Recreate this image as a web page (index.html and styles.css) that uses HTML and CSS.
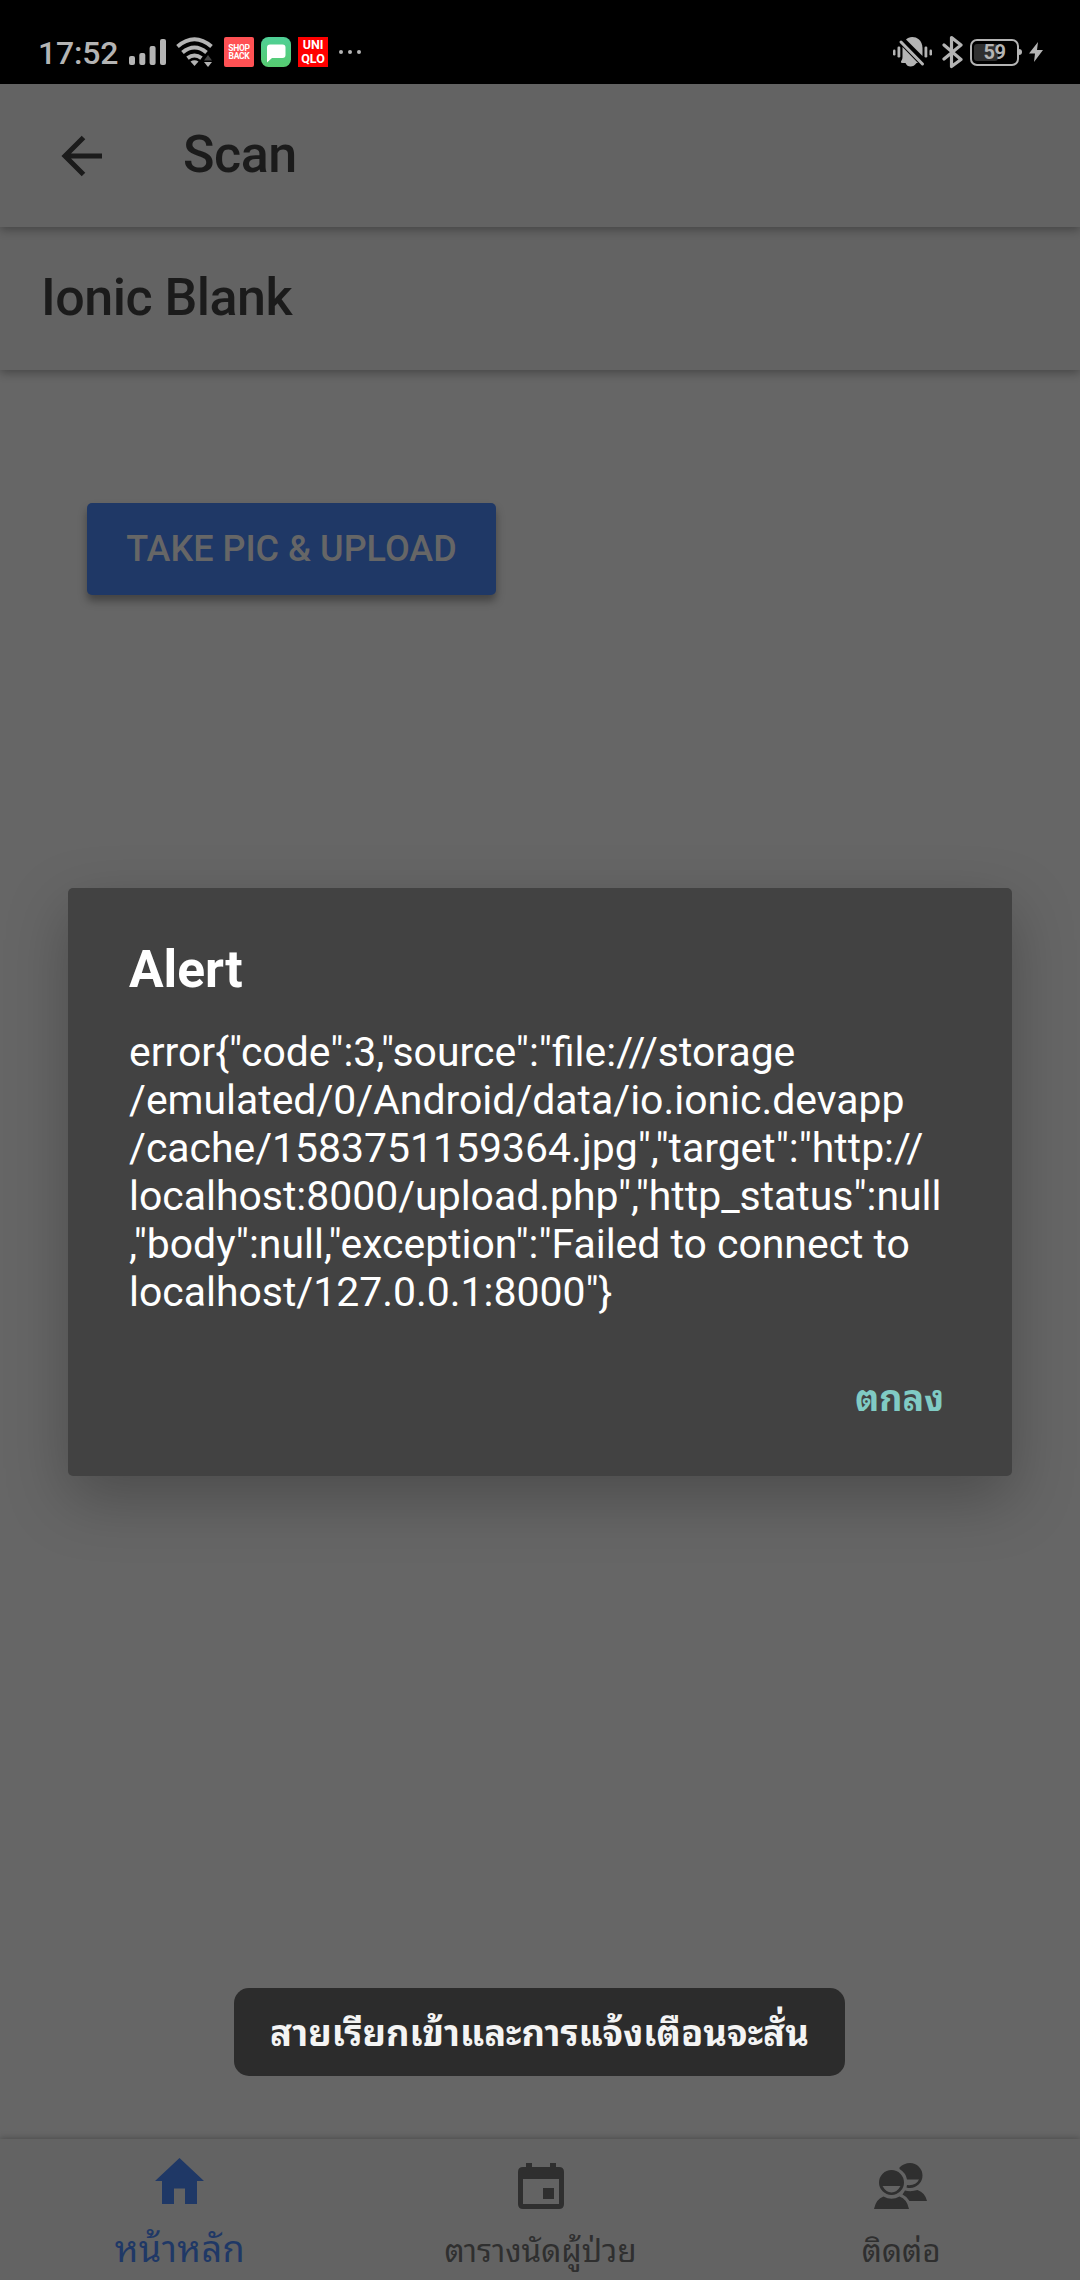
FILE: index.html
```html
<!DOCTYPE html>
<html lang="th">
<head>
<meta charset="utf-8">
<title>Scan</title>
<link rel="stylesheet" href="styles.css">
</head>
<body>
<div class="screen">
  <div class="statusbar">
    <div class="status-left">
      <span class="clock">17:52</span>
      <svg class="signal" width="38" height="27" viewBox="0 0 38 27" fill="#b4b4b4"><rect x="0" y="17" width="6" height="9" rx="2"/><rect x="10.300" y="14" width="6" height="12" rx="2"/><rect x="20.600" y="7" width="6" height="19" rx="2"/><rect x="31" y="0" width="6" height="26" rx="2"/></svg>
      <svg class="wifi" width="38" height="30" viewBox="0 0 38 30" fill="none" stroke="#b4b4b4" stroke-width="4"><path d="M1.500 9.500Q18.500-5 35.500 9.500"/><path d="M6.500 15.500Q18.500 5.500 30.500 15.500"/><path d="M11.500 21.200Q18.500 15.800 25.500 21.200"/><path d="M14.500 24.500Q18.500 22 22.500 24.500L18.500 29z" fill="#b4b4b4" stroke="none"/><path d="M28 23.500L32 18l4 5.500z" fill="#444" stroke="none"/><path d="M28 25h8l-4 5z" fill="#b4b4b4" stroke="none"/></svg>
      <span class="app shop"><b>SHOP</b><b>BACK</b></span>
      <svg class="msg" width="30" height="30" viewBox="0 0 30 30"><defs><linearGradient id="g" x2="0" y2="1"><stop stop-color="#4fd097"/><stop offset="1" stop-color="#57cb70"/></linearGradient></defs><rect width="30" height="30" rx="7.500" fill="url(#g)"/><path d="M9 7.500H21.500Q24.500 7.500 24.500 10.500V18Q24.500 21 21.500 21H11L6 25.500V10.500Q6 7.500 9 7.500z" fill="#fff"/></svg>
      <span class="app uniqlo"><b>UNI</b><b>QLO</b></span>
      <svg class="more" width="24" height="6" viewBox="0 0 24 6" fill="#b4b4b4"><circle cx="3" cy="3" r="2"/><circle cx="12" cy="3" r="2"/><circle cx="21" cy="3" r="2"/></svg>
    </div>
    <div class="status-right">
      <svg width="40" height="32" viewBox="0 0 40 32" fill="#b4b4b4"><rect x="0" y="13.500" width="2.500" height="6" rx="1.200"/><rect x="4.500" y="10.500" width="2.800" height="11" rx="1.200"/><rect x="31.500" y="10.500" width="2.800" height="11" rx="1.200"/><rect x="36.500" y="13.500" width="2.500" height="6" rx="1.200"/><path d="M13 3.500C17-1 29 0 29.500 12V20z"/><path d="M9.500 11L25 27H23.500Q21 30.500 17.500 30.500T12.500 27H9.500Q7 27 8.500 24.500 9.500 23.500 9.500 21z"/><path d="M8 6L29.500 28" fill="none" stroke="#b4b4b4" stroke-width="3" stroke-linecap="round"/></svg>
      <svg class="bt" width="22" height="34" viewBox="0 0 22 34" fill="none" stroke="#b4b4b4" stroke-width="3.200" stroke-linejoin="round" stroke-linecap="round"><path d="M2 10L19 24.500 9.500 31.500V2.500L19 10 2 24"/></svg>
      <div class="battery"><span class="level"></span><span class="pct">59</span></div>
      <svg class="bolt" width="14" height="20" viewBox="0 0 14 20" fill="#b4b4b4"><path d="M9 0L0 11.500H6L5 20 14 8H8z"/></svg>
    </div>
  </div>

  <header class="toolbar toolbar-back">
    <svg width="42" height="42" viewBox="0 0 42 42" fill="none" stroke="#1b1b1b" stroke-width="5"><path d="M41 21H4M22.500 2.500L4 21 22.500 39.500"/></svg>
    <h1>Scan</h1>
  </header>
  <header class="toolbar"><h1>Ionic Blank</h1></header>

  <main class="content">
    <button class="upload">TAKE PIC &amp; UPLOAD</button>
  </main>

  <nav class="tabs">
    <a class="tab active">
      <svg width="50" height="46" viewBox="0 0 50 46" fill="#1f3866"><path d="M24.500 0L49 23H42V46H30V30.500H19V46H7V23H0z"/></svg>
      <span>หน้าหลัก</span>
    </a>
    <a class="tab">
      <svg width="46" height="46" viewBox="0 0 46 46" fill="#2f2f2f"><path fill-rule="evenodd" d="M8 0H14V4H32V0H38V4H41Q46 4 46 9V41Q46 46 41 46H5Q0 46 0 41V9Q0 4 5 4H8zM5 16V41H41V16zM25 25H36V36H25z"/></svg>
      <span>ตารางนัดผู้ป่วย</span>
    </a>
    <a class="tab">
      <svg width="54" height="46" viewBox="0 0 54 46" fill="#2f2f2f"><path fill-rule="evenodd" d="M17.500 7a12.500 12.500 0 1 1 0 25 12.500 12.500 0 1 1 0-25zM8.500 23Q12 29.500 17.500 29.500T26.500 23z"/><path d="M0 46Q2 36 9.500 33.500 17.500 38 25.500 33.500 33 36 35 46z"/><path fill-rule="evenodd" d="M25.500 4.500Q30 0 36 0A12.500 12.500 0 0 1 36 25Q34 25 32.500 24.500L33 22Q42 23 45 16.500H33Q32 10 25.500 6z"/><path d="M31 27.500Q37 29 43.500 27 51 29.500 53 38H35.500Q33 33.500 28.500 31.500z"/></svg>
      <span>ติดต่อ</span>
    </a>
  </nav>

  <section class="alert">
    <h2>Alert</h2>
    <p>error{"code":3,"source":"file:///storage<br>/emulated/0/Android/data/io.ionic.devapp<br>/cache/1583751159364.jpg","target":"http://<br>localhost:8000/upload.php","http_status":null<br>,"body":null,"exception":"Failed to connect to<br>localhost/127.0.0.1:8000"}</p>
    <button class="ok">ตกลง</button>
  </section>
  <div class="toast">สายเรียกเข้าและการแจ้งเตือนจะสั่น</div>
</div>
</body>
</html>
```
FILE: styles.css
```css
* { box-sizing: border-box; }
body { margin: 0; font-family: Roboto, "Noto Sans Thai Looped", "Noto Looped Thai", Waree, Loma, Garuda, "Noto Sans Thai", sans-serif; }
svg { display: block; flex: none; }
button { border: 0; padding: 0; font-family: inherit; }
.screen { position: relative; display: flex; flex-direction: column; width: 1080px; height: 2280px; overflow: hidden; background: #666; }

.statusbar { flex: none; display: flex; justify-content: space-between; height: 84px; padding: 20px 37px 0 38px; background: #000; color: #b4b4b4; }
.status-left, .status-right { display: flex; align-items: center; height: 64px; }
.clock { width: 91px; padding-top: 2px; font-size: 32px; font-weight: 500; letter-spacing: -.2px; line-height: 64px; }
.wifi { margin-left: 9px; }
.app { display: flex; flex-direction: column; justify-content: center; width: 30px; height: 30px; color: #fff; text-align: center; }
.shop { margin-left: 10px; border-radius: 2px; background: #ff5154; font-family: "Liberation Sans Narrow", Roboto, sans-serif; font-size: 8.500px; line-height: 8.500px; letter-spacing: -.3px; }
.msg { margin-left: 7px; }
.uniqlo { margin-left: 7px; background: #f00; font-family: "Liberation Sans Narrow", Roboto, sans-serif; font-size: 12.500px; line-height: 14px; }
.more { margin-left: 10px; }
.bt { margin-left: 9px; }
.battery { position: relative; width: 49px; height: 27px; margin-left: 6px; border: 2px solid #b4b4b4; border-radius: 7px; text-align: center; }
.battery::after { content: ""; position: absolute; right: -5px; top: 8px; width: 3px; height: 6px; border-radius: 0 3px 3px 0; background: #b4b4b4; }
.level { position: absolute; left: 2px; top: 3px; width: 24px; height: 17px; border-radius: 3px; background: #303030; }
.pct { display: block; position: relative; font-size: 20px; font-weight: 700; letter-spacing: -.5px; line-height: 23px; }
.bolt { margin-left: 10px; }

.toolbar { flex: none; position: relative; z-index: 1; display: flex; align-items: center; height: 143px; padding-left: 41px; background: #636363; box-shadow: 0 3px 9px rgba(0, 0, 0, .3); }
.toolbar-back { z-index: 2; padding-left: 61px; gap: 80px; }
.toolbar h1 { margin: 0; padding-bottom: 1px; color: #1b1b1b; font-size: 52px; font-weight: 500; letter-spacing: -.5px; line-height: 60px; }

.content { flex: 1; padding: 133px 87px 0; }
.upload { width: 409px; height: 92px; padding-bottom: 1px; border-radius: 5px; background: #1f3866; color: #666; box-shadow: 0 6px 9px rgba(0, 0, 0, .35); font-size: 36px; font-weight: 500; }

.tabs { flex: none; display: flex; height: 141px; background: #636363; box-shadow: 0 -1px 6px rgba(0, 0, 0, .25); }
.tab { flex: 1; display: flex; flex-direction: column; align-items: center; padding: 24px 0 0 3px; color: #2f2f2f; font-size: 31.500px; }
.tab span { margin-top: 18px; line-height: 50px; }
.active { padding: 19px 0 0 1px; color: #1f3866; font-size: 36px; letter-spacing: .4px; }
.active span { margin-top: 21px; }

.alert { position: absolute; left: 68px; top: 888px; display: flex; flex-direction: column; width: 944px; height: 588px; padding: 51px 61px 0; border-radius: 5px; background: #424242; color: #fff; box-shadow: 0 22px 62px rgba(0, 0, 0, .26); }
.alert h2 { margin: 0; font-size: 51.500px; font-weight: 700; line-height: 62px; }
.alert p { margin: 27px 0 0; font-size: 40.930px; line-height: 48px; white-space: nowrap; }
.ok { align-self: flex-end; margin: 58px 7px 0 0; background: none; color: #80cbc4; font-size: 35.800px; font-weight: 700; line-height: 50px; }
.toast { position: absolute; left: 234px; top: 1988px; width: 611px; height: 88px; padding-top: 2px; border-radius: 15px; background: #2c2c2c; color: #f4f4f4; font-size: 36.300px; font-weight: 700; line-height: 88px; text-align: center; white-space: nowrap; }
```
